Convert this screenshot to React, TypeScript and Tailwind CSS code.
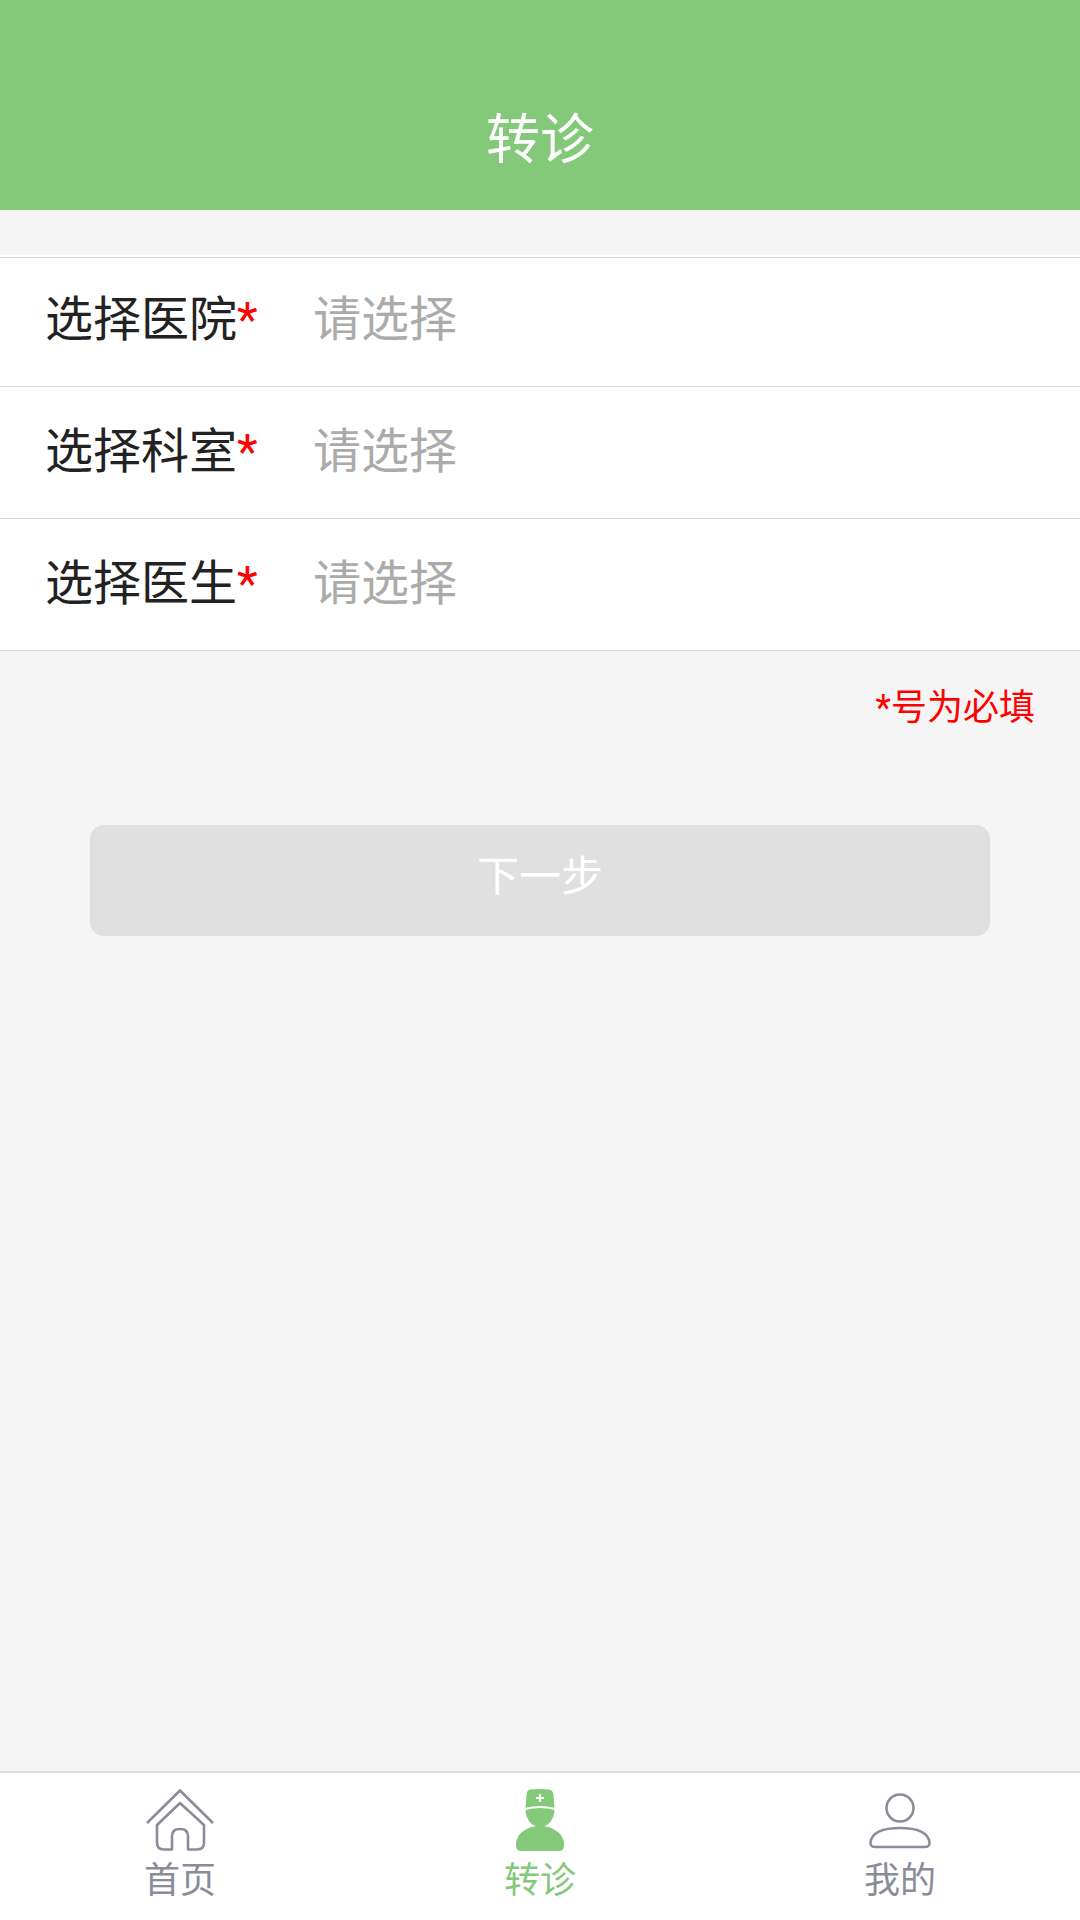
const font = "font-['Roboto','Noto_Sans_CJK_SC','Noto_Sans_CJK_JP',sans-serif]";

function HomeIcon() {
  return (
    <svg width="68" height="62" viewBox="0 0 68 62" fill="none" stroke="#8a8c99" strokeWidth="2.6" strokeLinejoin="round">
      <path d="M1 34 L34 1.5 L67 34" />
      <path d="M11 36 L34 14 L58 36 V54 Q58 60.5 51 60.5 H42 V47 Q42 40 34 40 Q26 40 26 47 V60.5 H18 Q11 60.5 11 54 Z" />
    </svg>
  );
}

function DoctorIcon() {
  return (
    <svg width="48" height="62" viewBox="0 0 48 62" fill="#84c97a">
      <path d="M14 0.5 Q24 -0.5 33 0.5 Q37 1 37.5 6 L38.5 20 Q38 36 24 38 Q10 36 9.5 20 L10.5 6 Q11 1 14 0.5 Z" />
      <path d="M0 56 Q0 44 14 38.5 Q24 35 34 38.5 Q48 44 48 56 Q48 62 43 62 H5 Q0 62 0 56 Z" />
      <path d="M24 5 V13 M20 9 H28" stroke="#fff" strokeWidth="2.2" />
      <path d="M9 20 Q24 16 39 20" stroke="#fff" strokeWidth="2" fill="none" />
    </svg>
  );
}

function UserIcon() {
  return (
    <svg width="62" height="62" viewBox="0 0 62 62" fill="none" stroke="#8a8c99" strokeWidth="2.6">
      <circle cx="31" cy="19" r="13.5" />
      <path d="M6 58 Q1 58 1.5 53 Q4 39 31 39 Q58 39 60.5 53 Q61 58 56 58 Z" />
    </svg>
  );
}

function Row({ label }: { label: string }) {
  return (
    <div className="flex h-[132px] items-end border-b border-[#d9d9d9] pb-[42px] pl-[45px] first:h-[129px]">
      <span className="w-[268px] text-[48px] leading-none text-[#222222]">
        {label}
        <span className="text-[#ff0000]">*</span>
      </span>
      <span className="text-[48px] leading-none text-[#ababab]">请选择</span>
    </div>
  );
}

export default function App() {
  const tabs = [
    { label: "首页", icon: <HomeIcon />, color: "text-[#8a8c99]" },
    { label: "转诊", icon: <DoctorIcon />, color: "text-[#84c97a]" },
    { label: "我的", icon: <UserIcon />, color: "text-[#8a8c99]" },
  ];
  return (
    <div className={`flex h-[1920px] w-[1080px] flex-col bg-[#f5f5f5] ${font}`}>
      <header className="flex h-[210px] items-end justify-center bg-[#84c97a] pb-[42px]">
        <h1 className="text-[54px] font-normal leading-none text-white">转诊</h1>
      </header>
      <div className="mt-[45px] bg-white pt-[2px]">
        <div className="border-t border-[#d9d9d9]">
          <Row label="选择医院" />
          <Row label="选择科室" />
          <Row label="选择医生" />
        </div>
      </div>
      <p className="mt-[39px] pr-[45px] text-right text-[36px] leading-none text-[#ff0000]">*号为必填</p>
      <button
        type="button"
        className="mx-auto mt-[99px] flex h-[111px] w-[900px] justify-center rounded-[14px] bg-[#e0e0e0] pt-[31px] text-[42px] leading-none text-white"
      >
        下一步
      </button>
      <nav className="mt-auto grid h-[149px] grid-cols-3 border-t-2 border-[#dddddd] bg-white pt-[16px]">
        {tabs.map((t) => (
          <div key={t.label} className={`flex flex-col items-center ${t.color}`}>
            <div className="flex h-[62px] items-end">{t.icon}</div>
            <span className="mt-[12px] text-[36px] leading-none">{t.label}</span>
          </div>
        ))}
      </nav>
    </div>
  );
}
